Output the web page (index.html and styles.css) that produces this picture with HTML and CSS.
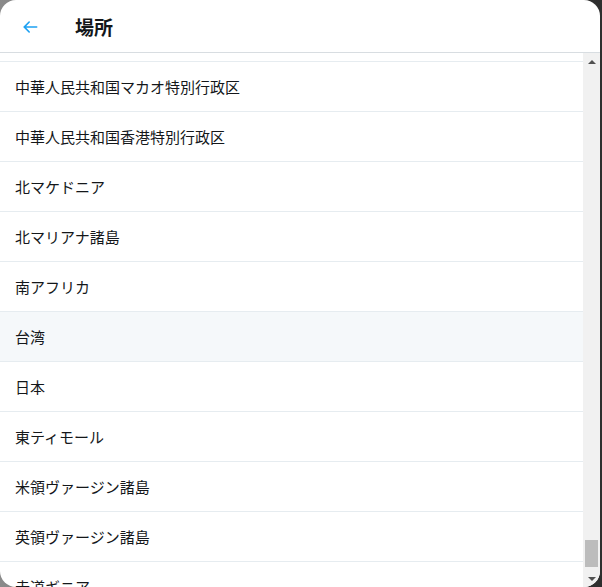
FILE: index.html
```html
<!DOCTYPE html>
<html lang="ja">
<head>
<meta charset="utf-8">
<link rel="stylesheet" href="styles.css">
</head>
<body>
<div class="modal">
  <header class="header">
    <button class="back" aria-label="戻る">
      <svg viewBox="0 0 24 24" width="20" height="20"><path d="M20 11H7.414l4.293-4.293a1 1 0 0 0-1.414-1.414l-6 6a1 1 0 0 0 0 1.414l6 6a1 1 0 0 0 1.414-1.414L7.414 13H20a1 1 0 0 0 0-2z" fill="#1da1f2"/></svg>
    </button>
    <h1 class="title">場所</h1>
  </header>
  <div class="body">
    <div class="viewport">
      <ul class="list">
        <li class="row">中華民国</li>
        <li class="row">中華人民共和国マカオ特別行政区</li>
        <li class="row">中華人民共和国香港特別行政区</li>
        <li class="row">北マケドニア</li>
        <li class="row">北マリアナ諸島</li>
        <li class="row">南アフリカ</li>
        <li class="row row-hover">台湾</li>
        <li class="row">日本</li>
        <li class="row">東ティモール</li>
        <li class="row">米領ヴァージン諸島</li>
        <li class="row">英領ヴァージン諸島</li>
        <li class="row">赤道ギニア</li>
      </ul>
    </div>
    <div class="scrollbar">
      <div class="sb-btn"><span class="tri-up"></span></div>
      <div class="sb-track"><div class="sb-thumb"></div></div>
      <div class="sb-btn"><span class="tri-down"></span></div>
    </div>
  </div>
</div>
</body>
</html>
```

FILE: styles.css
```css
html, body {
  margin: 0;
  padding: 0;
  height: 100%;
}
body {
  background: linear-gradient(90deg, #8a8a8a 0%, #5a5a5a 50%, #2e2e2e 100%);
  font-family: "Noto Sans CJK JP", "Noto Sans", sans-serif;
  color: #14171a;
  overflow: hidden;
}
.modal {
  width: 600px;
  height: 587px;
  background: #fff;
  border-radius: 16px;
  overflow: hidden;
  display: flex;
  flex-direction: column;
}
.header {
  height: 52px;
  flex: none;
  border-bottom: 1px solid #d8dde1;
  display: flex;
  align-items: center;
  padding-left: 20px;
  box-sizing: content-box;
}
.back {
  border: 0;
  background: none;
  padding: 0;
  width: 20px;
  height: 20px;
  display: flex;
  align-items: center;
  justify-content: center;
  margin-right: 35px;
  margin-top: 2px;
}
.title {
  margin: 0;
  font-size: 19px;
  font-weight: 700;
  line-height: 1;
  margin-top: 1px;
}
.body {
  flex: 1;
  display: flex;
  min-height: 0;
}
.viewport {
  flex: 1;
  overflow: hidden;
}
.list {
  list-style: none;
  margin: -41px 0 0 0;
  padding: 0;
}
.row {
  height: 49px;
  border-bottom: 1px solid #e6ecf0;
  display: flex;
  align-items: center;
  padding-left: 15px;
  font-size: 15px;
  color: #14171a;
}
.row-hover {
  background: #f5f8fa;
}
.scrollbar {
  width: 17px;
  flex: none;
  background: #f1f1f1;
  display: flex;
  flex-direction: column;
}
.sb-btn {
  height: 17px;
  display: flex;
  align-items: center;
  justify-content: center;
}
.sb-track {
  flex: 1;
  display: flex;
  flex-direction: column;
  justify-content: flex-end;
  padding: 0 2px;
}
.sb-thumb {
  height: 27px;
  background: #bcbcbc;
  margin-bottom: 3px;
}
.tri-up {
  width: 0;
  height: 0;
  border-left: 4px solid transparent;
  border-right: 4px solid transparent;
  border-bottom: 4px solid #505050;
}
.tri-down {
  width: 0;
  height: 0;
  border-left: 4px solid transparent;
  border-right: 4px solid transparent;
  border-top: 4px solid #505050;
}
```
